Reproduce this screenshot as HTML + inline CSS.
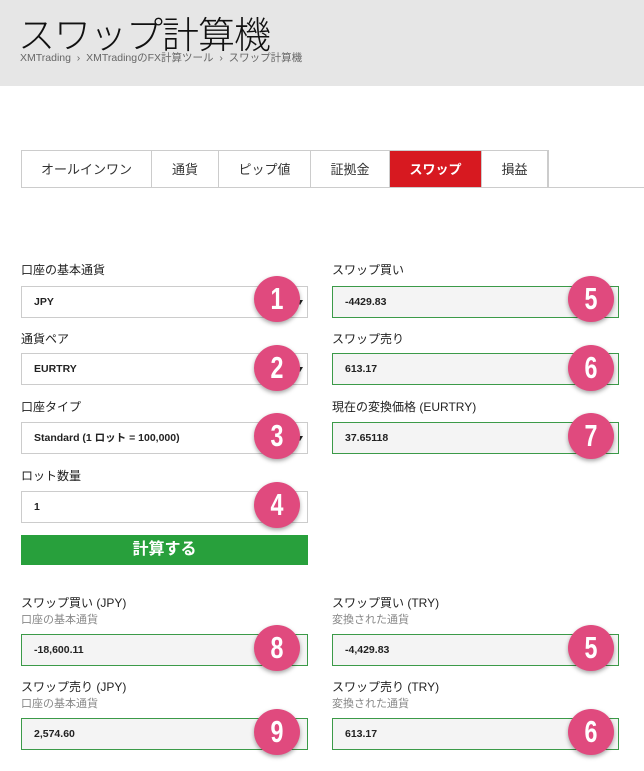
<!DOCTYPE html>
<html><head><meta charset="utf-8"><style>
*{box-sizing:border-box;margin:0;padding:0}
body{width:644px;height:771px;background:#fff;font-family:"Liberation Sans","Noto Sans CJK JP",sans-serif;color:#222;position:relative;overflow:hidden}
.hdr{position:absolute;left:0;top:0;width:644px;height:86px;background:#e6e6e6}
.h1{position:absolute;left:18px;top:5px;font-size:37px;color:#111;font-weight:300;letter-spacing:-1px}
.bc{position:absolute;left:20px;top:50px;font-size:10.5px;color:#666}
.tabs{position:absolute;left:21px;top:150px;height:38px;display:flex;border:1px solid #ccc;border-bottom:none}
.tabs div{height:37px;line-height:37px;text-align:center;font-size:13px;color:#333;border-right:1px solid #ccc}
.tabs .on{background:#d71920;color:#fff;font-weight:bold}
.line{position:absolute;left:21px;top:187px;width:623px;height:1px;background:#ccc}
.lbl{position:absolute;font-size:12px;color:#222}
.sub{position:absolute;font-size:11px;color:#888}
.in{position:absolute;width:287px;height:32px;border:1px solid #ccc;background:#fff;font-size:10.5px;font-weight:bold;padding-left:12px;line-height:30px}
.g{background:#f4f4f4;border:1px solid #3b9a48}
.arr{position:absolute;right:4px;top:13px;width:0;height:0;border-left:3px solid transparent;border-right:3px solid transparent;border-top:5px solid #222}
.b{position:absolute;width:46px;height:46px;border-radius:50%;background:#e04a7e;box-shadow:0 2px 4px rgba(0,0,0,.35)}
.b span{display:block;color:#fff;font-size:31px;font-weight:bold;text-align:center;line-height:46px;transform:scaleX(.75)}
.btn{position:absolute;left:21px;top:535px;width:287px;height:30px;background:#28a03c;color:#fff;font-size:16px;font-weight:bold;text-align:center;line-height:30px}
</style></head><body>
<div class="hdr"><div class="h1">スワップ計算機</div><div class="bc">XMTrading &nbsp;›&nbsp; XMTradingのFX計算ツール &nbsp;›&nbsp; スワップ計算機</div></div>
<div class="tabs"><div style="width:130px">オールインワン</div><div style="width:67px">通貨</div><div style="width:92px">ピップ値</div><div style="width:79px">証拠金</div><div class="on" style="width:92px">スワップ</div><div style="width:66px">損益</div></div>
<div class="line"></div>

<div class="lbl" style="left:21px;top:261px">口座の基本通貨</div>
<div class="in" style="left:21px;top:286px">JPY<span class="arr"></span></div>
<div class="lbl" style="left:21px;top:330px">通貨ペア</div>
<div class="in" style="left:21px;top:353px">EURTRY<span class="arr"></span></div>
<div class="lbl" style="left:21px;top:398px">口座タイプ</div>
<div class="in" style="left:21px;top:422px">Standard (1 ロット = 100,000)<span class="arr"></span></div>
<div class="lbl" style="left:21px;top:467px">ロット数量</div>
<div class="in" style="left:21px;top:491px">1</div>
<div class="btn">計算する</div>

<div class="lbl" style="left:332px;top:261px">スワップ買い</div>
<div class="in g" style="left:332px;top:286px">-4429.83</div>
<div class="lbl" style="left:332px;top:330px">スワップ売り</div>
<div class="in g" style="left:332px;top:353px">613.17</div>
<div class="lbl" style="left:332px;top:398px">現在の変換価格 (EURTRY)</div>
<div class="in g" style="left:332px;top:422px">37.65118</div>

<div class="lbl" style="left:21px;top:594px">スワップ買い (JPY)</div>
<div class="sub" style="left:21px;top:611px">口座の基本通貨</div>
<div class="in g" style="left:21px;top:634px">-18,600.11</div>
<div class="lbl" style="left:21px;top:678px">スワップ売り (JPY)</div>
<div class="sub" style="left:21px;top:695px">口座の基本通貨</div>
<div class="in g" style="left:21px;top:718px">2,574.60</div>

<div class="lbl" style="left:332px;top:594px">スワップ買い (TRY)</div>
<div class="sub" style="left:332px;top:611px">変換された通貨</div>
<div class="in g" style="left:332px;top:634px">-4,429.83</div>
<div class="lbl" style="left:332px;top:678px">スワップ売り (TRY)</div>
<div class="sub" style="left:332px;top:695px">変換された通貨</div>
<div class="in g" style="left:332px;top:718px">613.17</div>

<div class="b" style="left:254px;top:276px"><span>1</span></div>
<div class="b" style="left:254px;top:345px"><span>2</span></div>
<div class="b" style="left:254px;top:413px"><span>3</span></div>
<div class="b" style="left:254px;top:482px"><span>4</span></div>
<div class="b" style="left:568px;top:276px"><span>5</span></div>
<div class="b" style="left:568px;top:345px"><span>6</span></div>
<div class="b" style="left:568px;top:413px"><span>7</span></div>
<div class="b" style="left:254px;top:625px"><span>8</span></div>
<div class="b" style="left:254px;top:709px"><span>9</span></div>
<div class="b" style="left:568px;top:625px"><span>5</span></div>
<div class="b" style="left:568px;top:709px"><span>6</span></div>
</body></html>
